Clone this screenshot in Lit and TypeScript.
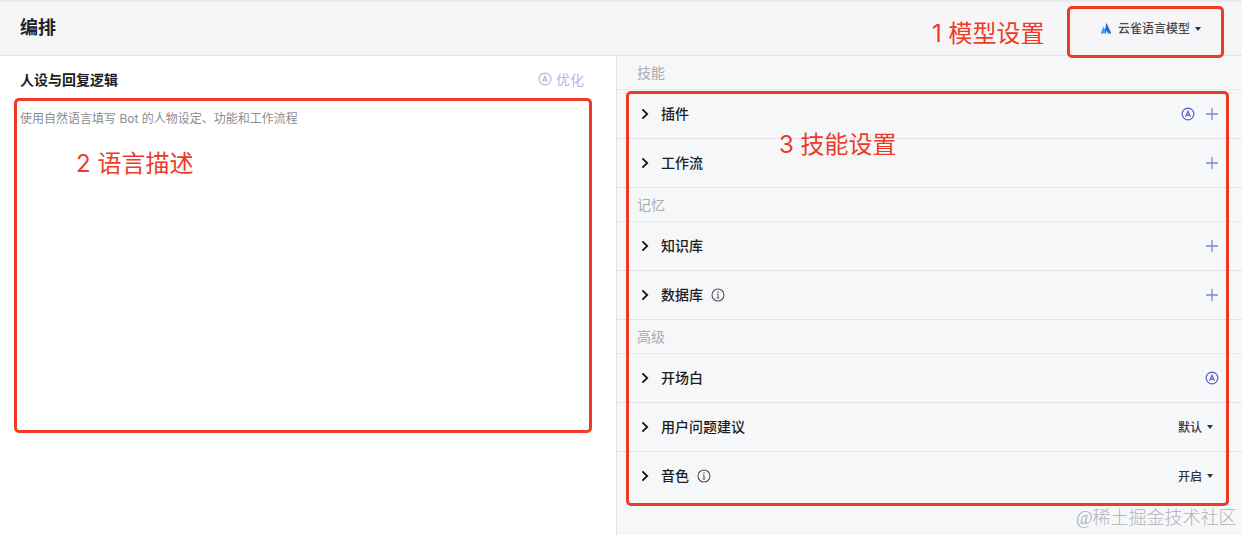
import { LitElement, html, css, svg } from "lit";
import { customElement } from "lit/decorators.js";

const chevron = html`<svg class="chev" width="10" height="12" viewBox="0 0 10 12"><path d="M2.4 1.4 L7.2 6 L2.4 10.6" fill="none" stroke="#15161a" stroke-width="1.8"/></svg>`;
const autoIcon = (cls: string) => html`<svg class=${cls} width="14" height="14" viewBox="0 0 14 14" fill="none"><circle cx="7" cy="7" r="5.9" stroke="currentColor" stroke-width="1.2"/><path d="M4.6 9.8 L7 4.2 L9.4 9.8 M5.4 8.2 H8.6" stroke="currentColor" stroke-width="1.2"/></svg>`;
const plus = html`<svg class="plus" width="12" height="12" viewBox="0 0 12 12"><path d="M6 0 V12 M0 6 H12" stroke="#8585d6" stroke-width="1.3"/></svg>`;
const info = html`<svg class="info" width="14" height="14" viewBox="0 0 14 14" fill="none"><circle cx="7" cy="7" r="6" stroke="#55565c" stroke-width="1.1"/><path d="M7 6 V10 M5.7 10 H8.3 M6 6 H7" stroke="#55565c" stroke-width="1"/><circle cx="7" cy="4.1" r=".75" fill="#55565c"/></svg>`;
const caret = html`<span class="caret"></span>`;

type Row = { t: string; info?: boolean; auto?: boolean; plus?: boolean; value?: string };
type Sec = { h: string; rows: Row[] };

const sections: Sec[] = [
  { h: "技能", rows: [{ t: "插件", auto: true, plus: true }, { t: "工作流", plus: true }] },
  { h: "记忆", rows: [{ t: "知识库", plus: true }, { t: "数据库", info: true, plus: true }] },
  { h: "高级", rows: [{ t: "开场白", auto: true }, { t: "用户问题建议", value: "默认" }, { t: "音色", info: true, value: "开启" }] },
];

@customElement("app-root")
export class AppRoot extends LitElement {
  static styles = css`
    :host { display: block; position: relative; width: 1242px; height: 535px; overflow: hidden; background: #f6f7f9;
      font-family: Inter, "Noto Sans CJK SC", sans-serif; color: #1c1d23; }
    .top { height: 56px; box-sizing: border-box; border-top: 2px solid #ebebee; border-bottom: 1px solid #e3e3e7; display: flex; align-items: center; justify-content: space-between; padding: 0 41px 0 20px; background: #f6f6f8; }
    .top h1 { margin: 0 0 2px; font-size: 18px; font-weight: 600; line-height: 24px; color: #1f2025; }
    .model { display: flex; align-items: center; font-size: 12px; font-weight: 500; color: #4a4b52; margin-bottom: 2px; }
    .model svg { margin-right: 6px; }
    .model .caret { margin-left: 5px; border-top-color: #33343a; }
    .main { display: flex; height: 479px; }
    .left { background: #fff; border-right: 1px solid #e3e3e7; padding: 0 32px 0 20px; box-sizing: content-box; width: 564px; }
    .lhead { display: flex; justify-content: space-between; align-items: center; height: 48px; }
    .lhead b { font-size: 14px; font-weight: 600; color: #1c1d23; margin-bottom: 2px; }
    .opt { display: flex; align-items: center; gap: 5px; font-size: 14px; color: #b4b4e8; margin-bottom: 2px; }
    .opt .a { color: #b4b4e8; }
    .ph { font-size: 12px; line-height: 18px; color: #8b8c92; margin-top: 6px; }
    .right { flex: 1; display: flex; flex-direction: column; }
    .sh { height: 33px; box-sizing: content-box; border-bottom: 1px solid #e8e8ec; padding-left: 20px; font-size: 14px; color: #a9aaae; display: flex; align-items: center; }
    .sh span { margin-bottom: 2px; }
    .row { height: 48px; border-bottom: 1px solid #e3e3e7; display: flex; align-items: center; padding: 0 24px 0 23px; font-size: 14px; font-weight: 500; color: #1c1d23; }
    .row.last { border-bottom: none; }
    .chev { margin-right: 11px; flex: none; }
    .row .t { margin: 0 8px 2px 0; }
    .sp { flex: 1; }
    .plus { margin-left: 12px; }
    .a { color: #5c5bd0; margin-right: -1px; }
    .val { font-size: 12px; color: #33343a; display: flex; align-items: center; gap: 4px; margin: 0 5px 2px 0; }
    .caret { display: inline-block; width: 0; height: 0; border-left: 3px solid transparent; border-right: 3px solid transparent; border-top: 4px solid #33343a; margin: 2px 0 0 1px; }
    .box { position: absolute; border: 3px solid #ee3a26; border-radius: 5px; box-sizing: border-box; pointer-events: none; }
    .b1 { left: 1067px; top: 6px; width: 157px; height: 52px; }
    .b2 { left: 14px; top: 98px; width: 578px; height: 335px; }
    .b3 { left: 626px; top: 91px; width: 603px; height: 415px; }
    .note { position: absolute; font-size: 24px; line-height: 30px; color: #ee3a26; white-space: nowrap; }
    .n1 { left: 932px; top: 19px; }
    .n2 { left: 76px; top: 149px; }
    .n3 { left: 779px; top: 130px; }
    .wm { position: absolute; left: 1076px; top: 505px; font-size: 18px; line-height: 26px; color: #b3b3b6; white-space: nowrap; font-family: "Liberation Serif", "Noto Sans CJK SC", serif; font-weight: 300; }
  `;

  render() {
    return html`
      <div class="top">
        <h1>编排</h1>
        <div class="model">
          <svg width="12" height="12" viewBox="0 0 12 12">
            ${svg`<path d="M0.6 11.5 L3.4 4.5 L5 7.4 L3.8 11.5 Z" fill="#3aa0ee"/><path d="M4.2 11.5 L6.4 0.8 L11.4 11.5 H8 L6.8 8.4 L5.8 11.5 Z" fill="#1a6fe0"/>`}
          </svg>
          云雀语言模型${caret}
        </div>
      </div>
      <div class="main">
        <div class="left">
          <div class="lhead"><b>人设与回复逻辑</b><span class="opt">${autoIcon("a")}优化</span></div>
          <div class="ph">使用自然语言填写 Bot 的人物设定、功能和工作流程</div>
        </div>
        <div class="right">
          ${sections.map((s, si) => html`
            <div class="sh"><span>${s.h}</span></div>
            ${s.rows.map((r, ri) => html`
              <div class="row ${si === 2 && ri === 2 ? "last" : ""}">
                ${chevron}<span class="t">${r.t}</span>${r.info ? info : ""}
                <span class="sp"></span>
                ${r.auto ? autoIcon("a") : ""}
                ${r.plus ? plus : ""}
                ${r.value ? html`<span class="val">${r.value}${caret}</span>` : ""}
              </div>`)}
          `)}
        </div>
      </div>
      <div class="box b1"></div>
      <div class="box b2"></div>
      <div class="box b3"></div>
      <div class="note n1">1 模型设置</div>
      <div class="note n2">2 语言描述</div>
      <div class="note n3">3 技能设置</div>
      <div class="wm">@稀土掘金技术社区</div>
    `;
  }
}
